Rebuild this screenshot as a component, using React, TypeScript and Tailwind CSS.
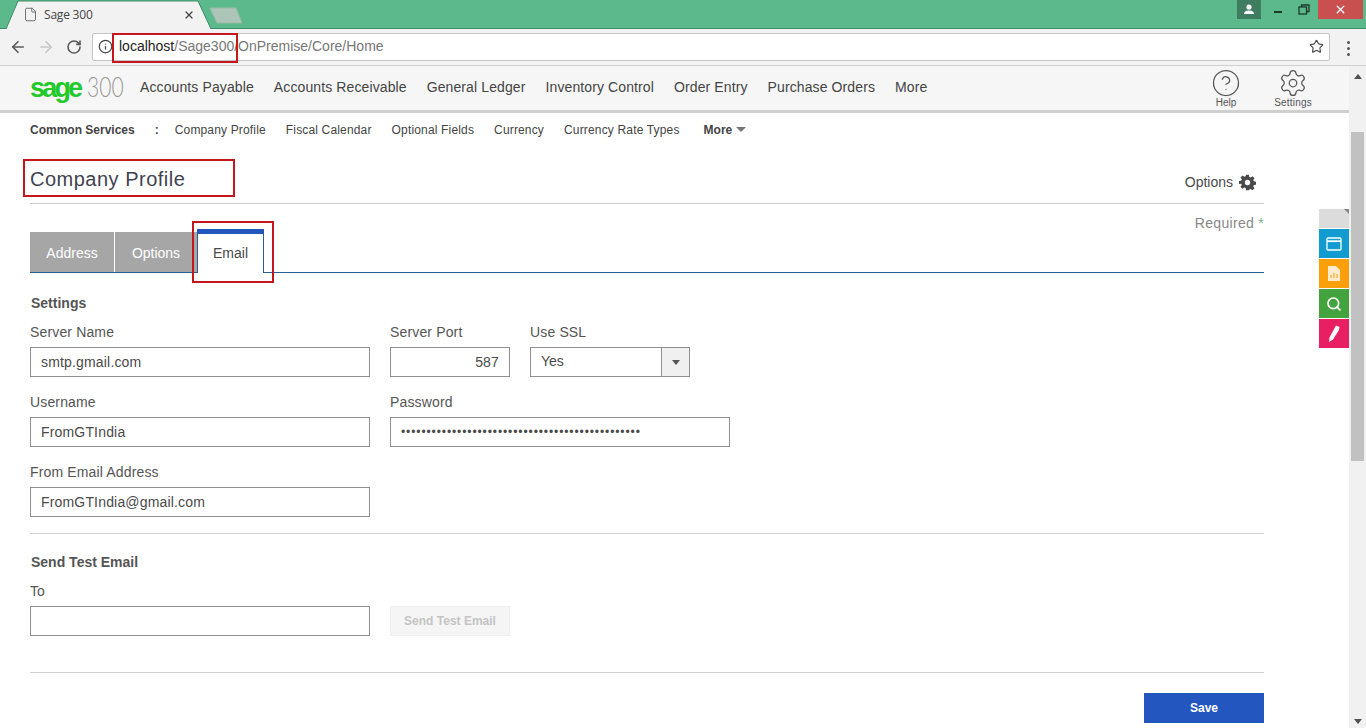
import React from "react";
import { ArrowLeft, ArrowRight, RotateCw, Info, Star, X, File, HelpCircle, Settings as SettingsIcon, Search } from "lucide-react";

const Field = ({ label, value, className = "", inputClass = "text-[14px] tracking-[0.17px]" }: { label: string; value: string; className?: string; inputClass?: string }) => (
  <div className={className}>
    <div className="h-[18px] text-[14px] leading-[18px] tracking-[0.15px] text-[#555]">{label}</div>
    <div className={`mt-[6px] flex h-[30px] items-center border border-[#8f8f8f] bg-white px-[10px] text-[#4a4a4a] ${inputClass}`}>{value}</div>
  </div>
);

const navItems = ["Accounts Payable", "Accounts Receivable", "General Ledger", "Inventory Control", "Order Entry", "Purchase Orders", "More"];
const subItems = ["Company Profile", "Fiscal Calendar", "Optional Fields", "Currency", "Currency Rate Types"];

export default function App() {
  return (
    <div className="relative h-[728px] w-[1366px] overflow-hidden bg-white [font-family:Liberation_Sans,Arial,sans-serif] text-[#4a4a4a]">
      {/* browser title bar */}
      <div className="absolute left-0 top-0 h-[29px] w-full border-b border-[#3f8d68] bg-[#5bb98c]" />
      <svg className="absolute left-0 top-0" width="250" height="30" viewBox="0 0 250 30">
        <path d="M6 29 L18 1 L198 1 L211 29" fill="#f2f2f2" stroke="#3f8d68" strokeWidth="1" />
        <path d="M210 8 L236 8 L242 23 L217 23 Z" fill="#adc4b8" stroke="#9cb8a8" strokeWidth="1" strokeLinejoin="round" />
      </svg>
      <File className="absolute left-[23px] top-[7px] text-[#555]" size={15} strokeWidth={1.3} />
      <div className="absolute left-[44px] top-[7px] [font-family:Open_Sans,sans-serif] text-[12px] leading-[16px] tracking-[-0.2px] text-[#444]">Sage 300</div>
      <X className="absolute left-[183px] top-[9px] text-[#444]" size={12} strokeWidth={2.5} />

      {/* window controls */}
      <div className="absolute left-[1237px] top-0 flex h-[19px] w-[24px] items-center justify-center bg-[#3f7d61]">
        <svg width="12" height="11" viewBox="0 0 12 11"><circle cx="6" cy="3" r="2.6" fill="#fff" /><path d="M1 10 C1 7 4 6.5 6 6.5 C8 6.5 11 7 11 10 Z" fill="#fff" /></svg>
      </div>
      <div className="absolute left-[1274px] top-[11px] h-[2px] w-[8px] bg-[#1d3a2c]" />
      <svg className="absolute left-[1298px] top-[4px]" width="12" height="11" viewBox="0 0 12 11" fill="none" stroke="#1d3a2c" strokeWidth="1.3">
        <rect x="1" y="3" width="7.5" height="7" /><path d="M3.5 3 V1 H11 V7.5 H8.5" />
      </svg>
      <div className="absolute left-[1318px] top-0 flex h-[19px] w-[45px] items-center justify-center bg-[#c9504f]">
        <X className="text-white" size={13} strokeWidth={2.5} />
      </div>

      {/* browser toolbar */}
      <div className="absolute left-0 top-[29px] h-[37px] w-full border-b border-[#d0d0d0] bg-[#f2f2f2]" />
      <ArrowLeft className="absolute left-[9px] top-[38px] text-[#5a5a5a]" size={18} strokeWidth={2.2} />
      <ArrowRight className="absolute left-[37px] top-[38px] text-[#c8c8c8]" size={18} strokeWidth={2.2} />
      <RotateCw className="absolute left-[66px] top-[39px] text-[#5a5a5a]" size={16} strokeWidth={2.4} />
      <div className="absolute left-[92px] top-[33px] flex h-[28px] w-[1238px] items-center rounded-[2px] border border-[#c4c4c4] bg-white pb-[1px] text-[14px]">
        <Info className="ml-[5px] text-[#444]" size={15} strokeWidth={2} />
        <span className="ml-[6px] text-[#222]">localhost</span>
        <span className="text-[#777]">/Sage300/OnPremise/Core/Home</span>
        <Star className="absolute left-[1216px] top-[5px] text-[#444]" size={15} strokeWidth={1.8} />
      </div>
      <div className="absolute left-[1347px] top-[41px] flex flex-col gap-[3px]">
        <span className="h-[3px] w-[3px] rounded-full bg-[#555]" /><span className="h-[3px] w-[3px] rounded-full bg-[#555]" /><span className="h-[3px] w-[3px] rounded-full bg-[#555]" />
      </div>

      {/* app header */}
      <div className="absolute left-0 top-[66px] h-[47px] w-[1349px] border-b-[3px] border-[#cfcfcf] bg-[#f6f6f6]">
        <div className="absolute left-[30px] top-[4px] flex items-baseline">
          <span className="text-[27px] font-bold leading-[34px] tracking-[-2.8px] text-[#22c92b]">sage</span>
          <span className="ml-[7px] inline-block origin-left scale-x-[0.78] [font-family:Lato,sans-serif] text-[27px] font-light leading-[34px] text-[#999]">300</span>
        </div>
        <div className="absolute left-[140px] top-[12px] flex gap-[20px] text-[14px] leading-[18px] tracking-[0.11px] text-[#444]">
          {navItems.map((n) => <span key={n}>{n}</span>)}
        </div>
        <div className="absolute left-[1206px] top-[2px] flex w-[40px] flex-col items-center">
          <HelpCircle className="text-[#555]" size={30} strokeWidth={1} />
          <span className="-mt-[1px] text-[10px] leading-[12px] text-[#555]">Help</span>
        </div>
        <div className="absolute left-[1268px] top-[2px] flex w-[50px] flex-col items-center">
          <SettingsIcon className="text-[#555]" size={30} strokeWidth={1} />
          <span className="text-[10px] leading-[10px] tracking-[0.2px] text-[#555]">Settings</span>
        </div>
      </div>

      {/* scrollbar */}
      <div className="absolute left-[1349px] top-[66px] h-[662px] w-[17px] bg-[#f1f1f1]">
        <div className="absolute left-[2px] top-[66px] h-[329px] w-[13px] bg-[#c1c1c1]" />
        <div className="absolute left-[5px] top-[8px] h-0 w-0 border-x-[4px] border-b-[5px] border-x-transparent border-b-[#505050]" />
        <div className="absolute bottom-[4px] left-[5px] h-0 w-0 border-x-[4px] border-t-[5px] border-x-transparent border-t-[#505050]" />
      </div>

      {/* page content */}
      <div className="absolute left-[30px] top-[113px] w-[1234px]">
        <div className="flex h-[33px] items-center text-[12px] text-[#444]">
          <span className="font-bold">Common Services</span>
          <span className="ml-[20px] font-bold">:</span>
          <div className="ml-[16px] flex gap-[20px] tracking-[0.16px]">
            {subItems.map((s) => <span key={s}>{s}</span>)}
          </div>
          <span className="ml-[24px] font-bold">More</span>
          <span className="ml-[4px] h-0 w-0 border-x-[5px] border-t-[5px] border-x-transparent border-t-[#777]" />
        </div>

        <div className="relative flex h-[58px] items-center justify-between border-b border-[#cccccc]">
          <h1 className="mt-[8px] text-[20px] font-normal tracking-[0.5px] text-[#3f4350]">Company Profile</h1>
          <div className="absolute right-[8px] top-[27px] flex items-center gap-[6px] text-[14px] leading-[18px] text-[#4a4a4a]">
            Options
            <svg width="17" height="17" viewBox="0 0 24 24" fill="#4a4a4a"><path fillRule="evenodd" d="M10 1h4l.6 3.1 1.9.8 2.6-1.8 2.8 2.8-1.8 2.6.8 1.9 3.1.6v4l-3.1.6-.8 1.9 1.8 2.6-2.8 2.8-2.6-1.8-1.9.8L14 23h-4l-.6-3.1-1.9-.8-2.6 1.8-2.8-2.8 1.8-2.6-.8-1.9L0 14v-4l3.1-.6.8-1.9L2.1 4.9l2.8-2.8 2.6 1.8 1.9-.8L10 1zm2 7.2a3.8 3.8 0 100 7.6 3.8 3.8 0 000-7.6z" /></svg>
          </div>
        </div>

        <div className="mt-[10px] text-right text-[14px] leading-[18px] tracking-[0.3px] text-[#888]">Required <span className="text-[#7fb08a]">*</span></div>

        {/* tabs */}
        <div className="mt-[-4px] flex h-[45px] items-end border-b border-[#2a5f8f] text-[14px]">
          <div className="flex h-[40px] w-[84px] items-center justify-center bg-[#a6a6a6] pt-[2px] text-white">Address</div>
          <div className="ml-px flex h-[40px] w-[82px] items-center justify-center bg-[#a6a6a6] pt-[2px] text-white">Options</div>
          <div className="relative top-px flex h-[44px] w-[67px] items-center justify-center border-x border-[#2a5f8f] border-t-[5px] border-t-[#2456bf] bg-white text-[#4a4a4a]">Email</div>
        </div>

        {/* form */}
        <div className="mt-[21px] h-[18px] pl-px text-[14px] font-bold leading-[18px] text-[#555]">Settings</div>
        <div className="mt-[11px] flex gap-[20px]">
          <Field label="Server Name" value="smtp.gmail.com" className="w-[340px]" />
          <Field label="Server Port" value="587" className="w-[120px]" inputClass="justify-end text-[14px] tracking-[0.17px]" />
          <div className="w-[160px]">
            <div className="h-[18px] text-[14px] leading-[18px] tracking-[0.15px] text-[#555]">Use SSL</div>
            <div className="mt-[6px] flex h-[30px] border border-[#8f8f8f] bg-white text-[14px] text-[#4a4a4a]">
              <span className="flex flex-1 items-center pb-[2px] pl-[10px]">Yes</span>
              <span className="flex w-[28px] items-center justify-center border-l border-[#8f8f8f] bg-[#f0f0f0]">
                <span className="h-0 w-0 border-x-[4px] border-t-[5px] border-x-transparent border-t-[#555]" />
              </span>
            </div>
          </div>
        </div>
        <div className="mt-[16px] flex gap-[20px]">
          <Field label="Username" value="FromGTIndia" className="w-[340px]" />
          <Field label="Password" value="•••••••••••••••••••••••••••••••••••••••••••••••" className="w-[340px]" inputClass="text-[12px] tracking-[0.9px]" />
        </div>
        <Field label="From Email Address" value="FromGTIndia@gmail.com" className="mt-[16px] w-[340px]" />
        <div className="mt-[16px] h-px bg-[#d4d4d4]" />

        <div className="mt-[19px] h-[18px] pl-px text-[14px] font-bold leading-[18px] text-[#555]">Send Test Email</div>
        <div className="mt-[11px] h-[18px] text-[14px] leading-[18px] text-[#555]">To</div>
        <div className="mt-[6px] flex gap-[20px]">
          <div className="h-[30px] w-[340px] border border-[#8f8f8f] bg-white" />
          <div className="flex h-[30px] w-[120px] items-center justify-center border border-[#efefef] bg-[#f5f5f5] text-[12px] font-bold text-[#c4c4c4]">Send Test Email</div>
        </div>
        <div className="mt-[36px] h-px bg-[#d0d0d0]" />
        <div className="mt-[20px] flex justify-end">
          <div className="flex h-[30px] w-[120px] items-center justify-center bg-[#2456bf] text-[12px] font-bold text-white">Save</div>
        </div>
      </div>

      {/* side widgets */}
      <div className="absolute left-[1319px] top-[209px] flex w-[30px] flex-col">
        <div className="relative h-[19px] bg-[#dcdcdc]">
          <div className="absolute right-0 top-0 h-0 w-0 border-l-[5px] border-t-[5px] border-l-transparent border-t-[#888]" />
        </div>
        <div className="mt-px flex h-[29px] items-center justify-center bg-[#119bcf]">
          <svg width="16" height="14" viewBox="0 0 16 14" fill="none" stroke="#fff" strokeWidth="1.3"><rect x="1" y="1" width="14" height="12" rx="1" /><path d="M1 4.2 H15" strokeWidth="1.8" /></svg>
        </div>
        <div className="mt-px flex h-[29px] items-center justify-center bg-[#fb9f0a]">
          <svg width="12" height="15" viewBox="0 0 12 15"><path d="M0 0 H8 L12 4 V15 H0 Z" fill="#fdeccc" /><path d="M3 12 V9 M6 12 V7 M9 12 V8" stroke="#fb9f0a" strokeWidth="1" /></svg>
        </div>
        <div className="mt-px flex h-[29px] items-center justify-center bg-[#42a33f]">
          <Search className="text-white" size={16} strokeWidth={2.5} />
        </div>
        <div className="mt-px flex h-[29px] items-center justify-center bg-[#e81f63]">
          <svg width="13" height="17" viewBox="0 0 13 17"><path d="M8 0.5 L11.5 2 L11 5 L5 14.5 L1 17 L1.5 12.5 Z" fill="#fff" /></svg>
        </div>
      </div>

      {/* red annotation boxes */}
      <div className="absolute left-[112px] top-[33px] h-[30px] w-[126px] border-2 border-[#c4161c]" />
      <div className="absolute left-[23px] top-[159px] h-[38px] w-[212px] border-2 border-[#c4161c]" />
      <div className="absolute left-[192px] top-[221px] h-[62px] w-[82px] border-2 border-[#c4161c]" />
    </div>
  );
}
